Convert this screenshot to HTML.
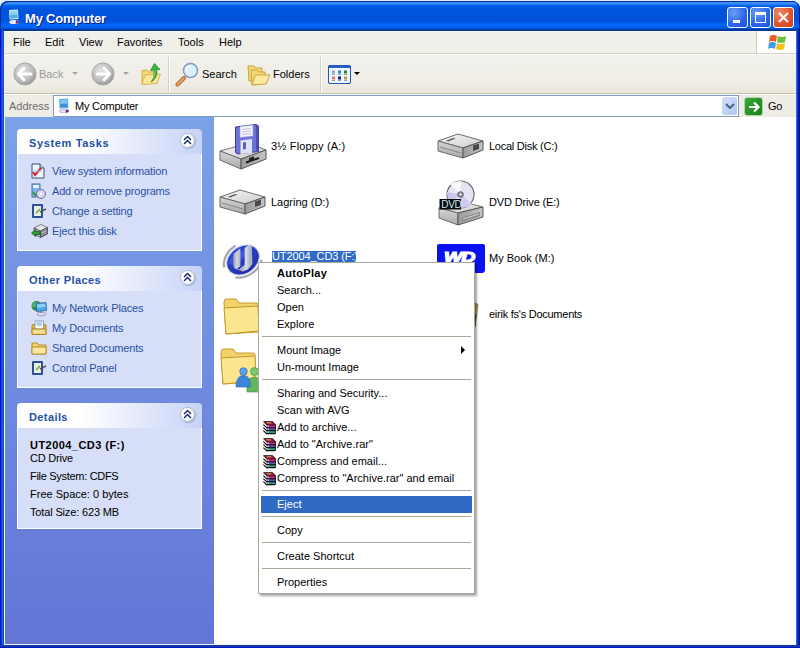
<!DOCTYPE html>
<html><head><meta charset="utf-8">
<style>
*{box-sizing:border-box}
html,body{margin:0;padding:0;width:800px;height:648px;overflow:hidden;background:#dfeef5}
body{font-family:"Liberation Sans",sans-serif;font-size:11px;color:#000;position:relative}
.a{position:absolute}
.t{position:absolute;white-space:nowrap;line-height:13px}
#win{position:absolute;left:0;top:1px;width:800px;height:647px;background:#0831d9;border-radius:8px 8px 0 0;overflow:hidden}
#title{position:absolute;left:0;top:0;width:800px;height:30px;border-radius:8px 8px 0 0;
 background:linear-gradient(to bottom,#0a3e9e 0px,#0a3e9e 1px,#3d8df7 1px,#3a8cf8 3px,#0a6af0 4px,#0058e3 6px,#0054dc 9px,#0052db 20px,#0064f6 23px,#0066fa 26px,#0048c0 28px,#003490 29px)}
#menubar{position:absolute;left:4px;top:31px;width:792px;height:23px;background:#f0efe9;border-top:1px solid #f8faff;border-bottom:1px solid #d6d3c6}
#toolbar{position:absolute;left:4px;top:54px;width:792px;height:40px;background:linear-gradient(#f8f8f4 0,#f1f0ea 3px,#efede6 28px,#ebe7da 38px);border-bottom:1px solid #c5c2b2}
#addr{position:absolute;left:4px;top:94px;width:792px;height:23px;background:#eeece4;border-top:1px solid #fff}
#pane{position:absolute;left:4px;top:117px;width:210px;height:527px;background:linear-gradient(#7ba2e7,#6375d6);border-left:1px solid #f0f4ff}
#content{position:absolute;left:214px;top:117px;width:582px;height:527px;background:#fff}
#bottom{position:absolute;left:4px;top:644px;width:792px;height:1px;background:#f0f4ff}
.box{position:absolute;left:17px;width:185px}
.hdr{position:absolute;left:0;top:0;width:185px;height:25px;border-radius:4px 4px 0 0;background:linear-gradient(to right,#fff 0%,#fff 35%,#c6d3f7 100%)}
.ht{position:absolute;left:12px;top:8px;font-weight:bold;color:#2150a6;white-space:nowrap;line-height:13px;letter-spacing:0.4px}
.bd{position:absolute;left:0;top:25px;width:185px;background:#d6dff7;border:1px solid #fff;border-top:none}
.chev{position:absolute;left:163px;top:4px;width:15px;height:15px;border-radius:50%;background:radial-gradient(circle at 45% 40%,#fff 60%,#eef0f8);border:1px solid #b4b8cc;box-shadow:1px 1px 1px rgba(120,130,170,.45)}
.lnk{position:absolute;left:34px;color:#2a50a6;letter-spacing:-0.17px;white-space:nowrap;line-height:13px}
.ic{position:absolute;left:13px}
.lbl{position:absolute;white-space:nowrap;line-height:13px}
.menu{position:absolute;left:258px;top:262px;width:217px;height:332px;background:#fff;border:1px solid #aca899;box-shadow:2px 2px 2px rgba(0,0,0,0.35)}
.mi{position:absolute;left:18px;white-space:nowrap;line-height:13px}
.sep{position:absolute;left:3px;width:209px;height:1px;background:#aca899}
</style></head><body>
<div id="win">
 <div id="title">
  <svg class="a" style="left:6px;top:7px" width="16" height="16" viewBox="0 0 16 16">
   <path d="M3 2 L12 1.5 L12.5 11 L3.5 11.5 Z" fill="#c8f0fc"/><path d="M4 3 L11.3 2.6 L11.6 10 L4.3 10.4 Z" fill="#8ad4f4"/><path d="M4.2 7 L11.5 6.5 L11.6 10 L4.3 10.4Z" fill="#5aaee8"/>
   <ellipse cx="8" cy="14" rx="4.8" ry="2" fill="#f0ecf6"/><path d="M10 12.5 Q13 12.5 12.8 14.5 Q11 16 9.5 15.5Z" fill="#6a2a8a"/>
  </svg>
  <div class="a" style="left:0;top:0;width:800px;height:30px;border-radius:8px 8px 0 0;box-shadow:inset 1px 1px 0 #0a2ea0, inset -1px 0 0 #00168a"></div>
  <div class="t" style="left:25px;top:10px;font-size:13px;font-weight:bold;color:#fff;text-shadow:1px 1px 0 #0a1e8a;line-height:15px;letter-spacing:-0.2px">My Computer</div>
  <div class="a" style="left:727px;top:6px;width:21px;height:21px;border:1px solid #fff;border-radius:3px;background:radial-gradient(circle at 30% 25%,#6b9cf8,#2b64e8 60%,#1d52d8)">
   <div class="a" style="left:5px;top:12px;width:7px;height:3px;background:#fff"></div></div>
  <div class="a" style="left:750px;top:6px;width:21px;height:21px;border:1px solid #fff;border-radius:3px;background:radial-gradient(circle at 30% 25%,#6b9cf8,#2b64e8 60%,#1d52d8)">
   <div class="a" style="left:4px;top:4px;width:11px;height:11px;border:1px solid #fff;border-top:3px solid #fff"></div></div>
  <div class="a" style="left:773px;top:6px;width:21px;height:21px;border:1px solid #fff;border-radius:3px;background:radial-gradient(circle at 30% 25%,#f08a68,#e0532a 60%,#c8401c)">
   <svg class="a" style="left:3px;top:3px" width="13" height="13"><path d="M2 2L11 11M11 2L2 11" stroke="#fff" stroke-width="2"/></svg></div>
 </div>
</div>

<div class="a" style="left:0;top:30px;width:4px;height:618px;background:linear-gradient(to right,#0012cc 0,#0012cc 1px,#0a3ae0 1px,#0a3ae0 2px,#1a62f2 2px,#1a62f2 3px,#0a4ec8 3px)"></div>
<div class="a" style="left:796px;top:30px;width:4px;height:618px;background:linear-gradient(to right,#2f6fe8 0,#2f6fe8 1px,#0038d8 1px,#0038d8 2px,#0020a8 2px,#0020a8 3px,#00108a 3px)"></div>
<div class="a" style="left:0;top:645px;width:800px;height:3px;background:linear-gradient(#1838a8 0,#1838a8 1px,#1038b8 1px,#1038b8 2px,#0018c0 2px)"></div>
<div id="menubar">
 <div class="t" style="left:9px;top:4px">File</div>
 <div class="t" style="left:41px;top:4px">Edit</div>
 <div class="t" style="left:75px;top:4px">View</div>
 <div class="t" style="left:113px;top:4px">Favorites</div>
 <div class="t" style="left:174px;top:4px">Tools</div>
 <div class="t" style="left:215px;top:4px">Help</div>
 <div class="a" style="left:752px;top:-1px;width:40px;height:22px;background:#fff;border-left:1px solid #cdc9bb">
  <svg class="a" style="left:11px;top:2px" width="20" height="18" viewBox="0 0 20 18">
   <path d="M2 3 Q5 1 9 3 L8 9 Q4 7 1 9 Z" fill="#ef5a24"/>
   <path d="M10 3 Q14 5 18 3 L17 9 Q13 11 9 9 Z" fill="#6fbe3b"/>
   <path d="M1 10 Q4 8 8 10 L7 16 Q3 14 0 16 Z" fill="#3f9be8"/>
   <path d="M9 10 Q13 12 17 10 L16 16 Q12 18 8 16 Z" fill="#f7c01b"/>
  </svg>
 </div>
</div>

<div id="toolbar"></div>
<!-- toolbar items (page coords) -->
<svg class="a" style="left:13px;top:62px" width="24" height="24" viewBox="0 0 24 24">
 <defs><radialGradient id="gg" cx="40%" cy="35%" r="65%"><stop offset="0" stop-color="#e6e6e6"/><stop offset="0.7" stop-color="#bcbcbc"/><stop offset="1" stop-color="#9a9a9a"/></radialGradient></defs>
 <circle cx="12" cy="12" r="11" fill="url(#gg)" stroke="#a8a8a8" stroke-width="1"/>
 <path d="M11 6 L5.5 12 L11 18 M6 12 H18" stroke="#fff" stroke-width="3" fill="none" stroke-linecap="round" stroke-linejoin="round"/>
</svg>
<div class="t" style="left:39px;top:68px;color:#9a9a9a">Back</div>
<svg class="a" style="left:72px;top:72px" width="7" height="4"><path d="M0 0H6L3 3Z" fill="#a7a7a7"/></svg>
<svg class="a" style="left:91px;top:62px" width="24" height="24" viewBox="0 0 24 24">
 <circle cx="12" cy="12" r="11" fill="url(#gg)" stroke="#a8a8a8" stroke-width="1"/>
 <path d="M13 6 L18.5 12 L13 18 M18 12 H6" stroke="#fff" stroke-width="3" fill="none" stroke-linecap="round" stroke-linejoin="round"/>
</svg>
<svg class="a" style="left:123px;top:72px" width="7" height="4"><path d="M0 0H6L3 3Z" fill="#a7a7a7"/></svg>
<svg class="a" style="left:140px;top:62px" width="22" height="24" viewBox="0 0 22 24">
 <path d="M2 8.5 L7 8 L9 10 L17 9.5 L17 21 L2 22.5 Z" fill="#f3d76e" stroke="#c9a230" stroke-width=".8"/>
 <path d="M2 22.5 L5 13 L20.5 12 L17 21.5 Z" fill="#fbe79a" stroke="#d7a84a" stroke-width=".8"/>
 <path d="M11 20 Q15 16 14 8 L10.5 8.5 L14.5 1.5 L20 7.5 L16.5 7.8 Q18 16 11 20 Z" fill="#3cb43c" stroke="#1b7a1b" stroke-width=".7"/>
 <path d="M13 17 Q15.5 13 15.2 8" stroke="#7fe07f" stroke-width=".8" fill="none"/>
</svg>
<div class="a" style="left:168px;top:57px;width:1px;height:35px;background:#d3d0c2"></div>
<div class="a" style="left:169px;top:57px;width:1px;height:35px;background:#fff"></div>
<svg class="a" style="left:174px;top:62px" width="26" height="26" viewBox="0 0 26 26">
 <path d="M3.5 22.5 L10 16" stroke="#b8743a" stroke-width="4.2" stroke-linecap="round"/>
 <path d="M3.5 22.5 L10 16" stroke="#eab07a" stroke-width="1.6" stroke-linecap="round"/>
 <circle cx="16.5" cy="8.5" r="7" fill="#dcefff" stroke="#7e9fc0" stroke-width="1.6"/>
 <path d="M12 8 Q13 4.5 17 4" stroke="#fff" stroke-width="1.5" fill="none"/>
</svg>
<div class="t" style="left:202px;top:68px">Search</div>
<svg class="a" style="left:246px;top:63px" width="26" height="24" viewBox="0 0 26 24">
 <path d="M2 3 L8 3 L10 5 L16 5 L16 16 L3 18 Z" fill="#f5da7a" stroke="#caa33a" stroke-width="1"/>
 <path d="M5 7 L11 7 L13 9 L19 9 L19 20 L6 22 Z" fill="#f5da7a" stroke="#caa33a" stroke-width="1"/>
 <path d="M6 22 L9 12 L24 12 L20 21 Z" fill="#fbe9a4" stroke="#caa33a" stroke-width="1"/>
</svg>
<div class="t" style="left:273px;top:68px">Folders</div>
<div class="a" style="left:320px;top:57px;width:1px;height:35px;background:#d3d0c2"></div>
<div class="a" style="left:321px;top:57px;width:1px;height:35px;background:#fff"></div>
<svg class="a" style="left:328px;top:65px" width="23" height="19" viewBox="0 0 23 19">
 <rect x="0.5" y="0.5" width="22" height="18" rx="1.5" fill="#fff" stroke="#1f57b8"/>
 <rect x="1" y="1" width="21" height="2" fill="#2a62c6"/>
 <rect x="1" y="3" width="21" height="15" fill="#eef6fe"/>
 <rect x="4" y="5.5" width="3" height="3" fill="#a596d0"/><rect x="10" y="5.5" width="3" height="3" fill="#2f86b8"/><rect x="16" y="5.5" width="3" height="3" fill="#1f8a2a"/>
 <rect x="4" y="9" width="3" height=".8" fill="#889"/><rect x="10" y="9" width="3" height=".8" fill="#889"/><rect x="16" y="9" width="3" height=".8" fill="#889"/>
 <rect x="4" y="11.5" width="3" height="3" fill="#e67a62"/><rect x="10" y="11.5" width="3" height="3" fill="#101e8a"/><rect x="16" y="11.5" width="3" height="3" fill="#b0a030"/>
 <rect x="4" y="15" width="3" height=".8" fill="#889"/><rect x="10" y="15" width="3" height=".8" fill="#889"/><rect x="16" y="15" width="3" height=".8" fill="#889"/>
 <rect x="0.5" y="0.5" width="22" height="18" rx="1.5" fill="none" stroke="#1f57b8"/>
</svg>
<svg class="a" style="left:354px;top:72px" width="7" height="4"><path d="M0 0H6L3 3Z" fill="#000"/></svg>

<div id="addr">
 <div class="t" style="left:5px;top:5px;color:#6d6d6d">Address</div>
 <div class="a" style="left:49px;top:0px;width:686px;height:22px;background:#fff;border:1px solid #7f9db9"></div>
</div>
<svg class="a" style="left:56px;top:97px" width="16" height="16" viewBox="0 0 16 16">
 <path d="M3 2 L12 1.5 L12.5 11 L3.5 11.5 Z" fill="#6aa8d8"/><path d="M4 3 L11.3 2.6 L11.6 10 L4.3 10.4 Z" fill="#7cc8f2"/><path d="M4.2 7 L11.5 6.5 L11.6 10 L4.3 10.4Z" fill="#3f90d8"/>
 <ellipse cx="8" cy="14" rx="4.8" ry="2" fill="#e6e0ee" stroke="#a090b0" stroke-width=".5"/><path d="M10 12.5 Q13 12.5 12.8 14.5 Q11 16 9.5 15.5Z" fill="#6a2a8a"/>
</svg>
<div class="t" style="left:75px;top:100px;letter-spacing:-0.25px">My Computer</div>
<div class="a" style="left:722px;top:97px;width:15px;height:18px;border-radius:2px;background:linear-gradient(135deg,#d2defc,#b2c6f2)">
 <svg class="a" style="left:3px;top:6px" width="10" height="6"><path d="M1 1 L5 5 L9 1" stroke="#4d6185" stroke-width="2" fill="none"/></svg>
</div>
<div class="a" style="left:744px;top:97px;width:19px;height:19px;border-radius:3px;background:linear-gradient(135deg,#3aa83a,#17801a);border:1px solid #a8d8a8">
 <svg class="a" style="left:1px;top:1px" width="16" height="16"><path d="M3 8 H12 M8 3.5 L12.5 8 L8 12.5" stroke="#fff" stroke-width="2.2" fill="none"/></svg>
</div>
<div class="t" style="left:768px;top:100px;letter-spacing:-0.4px">Go</div>

<div id="pane"></div>
<div id="content"></div>
<div id="bottom"></div>
<!-- TASK PANE -->
<div class="box" style="top:129px;height:122px">
 <div class="hdr"><div class="ht" style="letter-spacing:0.65px">System Tasks</div><div class="chev"><svg class="a" style="left:-1px;top:-1px" width="15" height="15"><path d="M4 7 L7.5 3.5 L11 7 M4 11 L7.5 7.5 L11 11" stroke="#1b2f70" stroke-width="1.5" fill="none"/></svg></div></div>
 <div class="bd" style="height:97px">
  <svg class="ic" style="top:9px" width="14" height="16" viewBox="0 0 14 16"><path d="M1 1 H9 L13 5 V15 H1 Z" fill="#f0f4fb" stroke="#3c4f7a"/><path d="M9 1 V5 H13" fill="#c8d8ef" stroke="#3c4f7a"/><path d="M2 9 L4 12 L10 5" stroke="#d22" stroke-width="2" fill="none"/><rect x="2" y="7" width="9" height="2" fill="#8cc8f0" opacity=".5"/></svg>
  <div class="lnk" style="top:11px">View system information</div>
  <svg class="ic" style="top:29px" width="16" height="16" viewBox="0 0 16 16"><rect x="1" y="1" width="8" height="13" fill="#7eb7e8" stroke="#4a70a0"/><rect x="2" y="2" width="6" height="3" fill="#e8f0f8"/><path d="M2 9 L5 13" stroke="#2a9a2a" stroke-width="2"/><circle cx="10" cy="11" r="4.5" fill="#d9d6ee" stroke="#6a6aa0"/><circle cx="10" cy="11" r="1.2" fill="#fff"/></svg>
  <div class="lnk" style="top:31px">Add or remove programs</div>
  <svg class="ic" style="top:49px" width="16" height="16" viewBox="0 0 16 16"><rect x="1" y="1" width="11" height="14" rx="1" fill="#2a4f96"/><rect x="3" y="3" width="7" height="10" fill="#e9f1d8"/><path d="M5 10 L9 6" stroke="#6aa040" stroke-width="1.5"/><path d="M9 9 L15 6" stroke="#555" stroke-width="1.5"/></svg>
  <div class="lnk" style="top:51px">Change a setting</div>
  <svg class="ic" style="top:69px" width="17" height="16" viewBox="0 0 17 16"><path d="M3 5 L10 1.5 L16.5 4.5 L9.5 8 Z" fill="#e8e8ec" stroke="#666" stroke-width=".8"/><path d="M3 5 L9.5 8 L9.5 14.5 L3 11.5 Z" fill="#b8b4c0" stroke="#555" stroke-width=".8"/><path d="M9.5 8 L16.5 4.5 L16.5 11 L9.5 14.5 Z" fill="#8a8a92" stroke="#444" stroke-width=".8"/><path d="M11 10 L15 8" stroke="#d8c8d8" stroke-width=".8"/><path d="M0.5 10 L4.5 6.5 V8.5 H8.5 V11.5 H4.5 V13.5 Z" fill="#2ea02e" stroke="#0d4d0d" stroke-width=".7"/></svg>
  <div class="lnk" style="top:71px">Eject this disk</div>
 </div>
</div>
<div class="box" style="top:266px;height:122px">
 <div class="hdr"><div class="ht">Other Places</div><div class="chev"><svg class="a" style="left:-1px;top:-1px" width="15" height="15"><path d="M4 7 L7.5 3.5 L11 7 M4 11 L7.5 7.5 L11 11" stroke="#1b2f70" stroke-width="1.5" fill="none"/></svg></div></div>
 <div class="bd" style="height:97px">
  <svg class="ic" style="top:9px" width="17" height="17" viewBox="0 0 17 17"><circle cx="5.5" cy="6" r="5" fill="#2a8a4a"/><path d="M1.5 4 Q5 0.5 9 3 L8 7 Q4 5 1.5 8Z" fill="#57c06a"/><path d="M5 3.5 L15 2.5 L15.5 10.5 L5.5 11.5 Z" fill="#4aa8ec" stroke="#2b5f9c" stroke-width=".8"/><path d="M6 4.5 L14 3.8 L14.3 7 L6.3 7.7Z" fill="#8fd0f8"/><ellipse cx="10.5" cy="14" rx="4.5" ry="2" fill="#dcd8ea" stroke="#7a7690" stroke-width=".6"/><path d="M10 11.5 V12.5" stroke="#555" stroke-width="1.5"/></svg>
  <div class="lnk" style="top:11px">My Network Places</div>
  <svg class="ic" style="top:29px" width="16" height="16" viewBox="0 0 16 16"><path d="M1 6 Q1 4.5 2.5 4.5 H14 Q15 4.5 15 6 V14 H1 Z" fill="#e8b838" stroke="#a07818" stroke-width=".8"/><rect x="4" y="1" width="8.5" height="8" fill="#fff" stroke="#6a7aa0" stroke-width=".7"/><path d="M5.5 3H11M5.5 5H11" stroke="#4a8ad0" stroke-width=".9"/><path d="M1 9 H15 V14.5 H1 Z" fill="#f6d66a" stroke="#a07818" stroke-width=".8"/><rect x="3" y="10.5" width="10" height="2.5" fill="#f0e4c0" opacity=".7"/></svg>
  <div class="lnk" style="top:31px">My Documents</div>
  <svg class="ic" style="top:50px" width="16" height="14" viewBox="0 0 16 14"><path d="M1 2 H6 L7.5 4 H15 V13 H1 Z" fill="#f3d36a" stroke="#b48e2a"/><path d="M1 6 H15 V13 H1 Z" fill="#fbe8a0" stroke="#b48e2a"/></svg>
  <div class="lnk" style="top:51px">Shared Documents</div>
  <svg class="ic" style="top:69px" width="16" height="16" viewBox="0 0 16 16"><rect x="1" y="1" width="11" height="14" rx="1" fill="#2a4f96"/><rect x="3" y="3" width="7" height="10" fill="#e9f1d8"/><path d="M5 10 L9 6" stroke="#6aa040" stroke-width="1.5"/><path d="M9 9 L15 6" stroke="#555" stroke-width="1.5"/></svg>
  <div class="lnk" style="top:71px">Control Panel</div>
 </div>
</div>
<div class="box" style="top:403px;height:126px">
 <div class="hdr"><div class="ht">Details</div><div class="chev"><svg class="a" style="left:-1px;top:-1px" width="15" height="15"><path d="M4 7 L7.5 3.5 L11 7 M4 11 L7.5 7.5 L11 11" stroke="#1b2f70" stroke-width="1.5" fill="none"/></svg></div></div>
 <div class="bd" style="height:101px">
  <div class="lbl" style="left:12px;top:11px;font-weight:bold;letter-spacing:0.45px">UT2004_CD3 (F:)</div>
  <div class="lbl" style="left:12px;top:24px;letter-spacing:-0.2px">CD Drive</div>
  <div class="lbl" style="left:12px;top:42px;letter-spacing:-0.3px">File System: CDFS</div>
  <div class="lbl" style="left:12px;top:60px">Free Space: 0 bytes</div>
  <div class="lbl" style="left:12px;top:78px;letter-spacing:-0.15px">Total Size: 623 MB</div>
 </div>
</div>
<!-- CONTENT ICONS -->
<svg width="0" height="0" style="position:absolute">
 <defs>
  <linearGradient id="dtop" x1="0" y1="0" x2="1" y2="1"><stop offset="0" stop-color="#f4f4f4"/><stop offset="0.5" stop-color="#e2e2e2"/><stop offset="1" stop-color="#c9c9c9"/></linearGradient>
  <linearGradient id="dleft" x1="0" y1="0" x2="0" y2="1"><stop offset="0" stop-color="#d6d6d6"/><stop offset="1" stop-color="#a9a9a9"/></linearGradient>
  <linearGradient id="dright" x1="0" y1="0" x2="1" y2="0"><stop offset="0" stop-color="#9a9a9a"/><stop offset="1" stop-color="#c4c4c4"/></linearGradient>
  <g id="drive">
   <path d="M1 10 L21 3 L46 10 L26 17 Z" fill="url(#dtop)" stroke="#6d6d6d" stroke-width="1"/>
   <path d="M1 10 L26 17 L26 27 L1 20 Z" fill="url(#dleft)" stroke="#6a6a6a" stroke-width="1"/>
   <path d="M26 17 L46 10 L46 19 L26 27 Z" fill="url(#dright)" stroke="#555" stroke-width="1"/>
   <path d="M3 16 L24 22" stroke="#8a8a8a" stroke-width="1"/>
   <path d="M36 14.5 L42 12.5 L42 18 L36 20 Z" fill="#4a4a4a"/>
   <path d="M9 9.8 L16.5 7 L18.5 7.6 L11 10.4 Z" fill="#505050"/>
  </g>
  <g id="rar">
   <path d="M0.3 0.3 H9.6 L13 3.8 V12.3 L12 13.3 H3.8 V4 Z" fill="#150008"/>
   <path d="M0.3 0.3 L3.8 4 L3.8 4.5 L0.3 1 Z" fill="#150008"/>
   <path d="M1.2 0.8 H9.3 L12.3 3.7 H4.2 Z" fill="#8a1d42"/>
   <path d="M3.2 1.2 H7.6 L8.9 2.6 H4.5 Z" fill="#d89a52"/>
   <rect x="4.3" y="4.4" width="8.2" height="1.9" fill="#c03488"/>
   <rect x="4.3" y="7.3" width="8.2" height="1.9" fill="#4a5cb0"/>
   <rect x="4.3" y="10.2" width="8.2" height="1.9" fill="#23a07e"/>
   <rect x="4.4" y="4.6" width="1.3" height="1.3" fill="#fff"/><rect x="4.4" y="7.5" width="1.3" height="1.3" fill="#fff"/><rect x="4.4" y="10.4" width="1.3" height="1.3" fill="#fff"/>
   <path d="M0.3 3.6 L4 7.2 M0.3 6.6 L4 10.2 M0.3 9.6 L4 13.2" stroke="#000" stroke-width="1.1"/>
  </g>
 </defs>
</svg>
<!-- Floppy A: -->
<svg class="a" style="left:219px;top:122px" width="48" height="48" viewBox="0 0 48 48">
 <path d="M1 29 L30 21 L47 28 L22 37 Z" fill="url(#dtop)" stroke="#777"/>
 <path d="M1 29 L22 37 L22 47 L1 38 Z" fill="url(#dleft)" stroke="#6a6a6a"/>
 <path d="M22 37 L47 28 L47 37 L22 47 Z" fill="url(#dright)" stroke="#555"/>
 <path d="M27 40.5 L40 36" stroke="#1a1a1a" stroke-width="2"/>
 <rect x="30" y="36" width="5" height="3.5" fill="#222" transform="skewY(-20) translate(0,11)"/>
 <path d="M16.5 5 L37 2.5 L39.5 4 L39.5 29.5 L19 32 L16.5 30.5 Z" fill="#6d72d8" stroke="#3a3e90"/>
 <path d="M37 2.5 L39.5 4 L39.5 29.5 L37 28 Z" fill="#4c51b0"/>
 <path d="M21 4.5 L34 3 L34 14 L21 15.5 Z" fill="#f2f2fa" stroke="#9a9ad0" stroke-width=".5"/>
 <path d="M23 7.5 L32 6.5 M23 10 L32 9 M23 12.5 L32 11.5" stroke="#b8b8d8" stroke-width=".8"/>
 <path d="M21.5 18.5 L33 17 L33 31 L21.5 32 Z" fill="#e0e3f6"/>
 <path d="M24 20.5 L27 20 L27 27 L24 27.5 Z" fill="#5a5fc0"/>
</svg>
<div class="lbl" style="left:271px;top:140px;letter-spacing:0.15px">3½ Floppy (A:)</div>
<!-- Local Disk C: -->
<svg class="a" style="left:437px;top:131px" width="48" height="30" viewBox="0 0 48 30"><use href="#drive"/></svg>
<div class="lbl" style="left:489px;top:140px;letter-spacing:-0.25px">Local Disk (C:)</div>
<!-- Lagring D: -->
<svg class="a" style="left:219px;top:187px" width="48" height="30" viewBox="0 0 48 30"><use href="#drive"/></svg>
<div class="lbl" style="left:271px;top:196px">Lagring (D:)</div>
<!-- DVD E: -->
<svg class="a" style="left:437px;top:178px" width="48" height="48" viewBox="0 0 48 48">
 <path d="M2 30 L26 24 L46 29 L21 35 Z" fill="url(#dtop)" stroke="#777"/>
 <path d="M2 30 L21 35 L21 47 L2 40 Z" fill="url(#dleft)" stroke="#6a6a6a"/>
 <path d="M21 35 L46 29 L46 39 L21 47 Z" fill="url(#dright)" stroke="#555"/>
 <path d="M25 39.5 L43 34 L43 38 L25 43.5 Z" fill="#8a8a8a"/>
 <path d="M26 41 L42 36" stroke="#d8d8d8" stroke-width="1"/>
 <circle cx="23.5" cy="16.5" r="13.5" fill="#e6e4f4" stroke="#6c6c78" stroke-width="1.2"/>
 <path d="M23.5 16.5 L13 6 Q18 3 24 3 Z" fill="#f8f8fd"/>
 <path d="M23.5 16.5 L35 26 Q30 30 23 30 Z" fill="#cfcaee"/>
 <path d="M23.5 16.5 L10 14 Q10 20 13 24 Z" fill="#c8c6ea"/>
 <circle cx="23.5" cy="16.5" r="2.8" fill="#9a9aa8" stroke="#555"/><circle cx="23.5" cy="16.5" r="1" fill="#fff"/>
 <rect x="2.5" y="21" width="21.5" height="10.5" fill="#0a0a0a"/>
 <text x="4.3" y="30" font-family="Liberation Sans" font-size="10" fill="#cdecf2" letter-spacing="-0.3">DVD</text>
</svg>
<div class="lbl" style="left:489px;top:196px;letter-spacing:-0.15px">DVD Drive (E:)</div>
<!-- UT2004 F: -->
<svg class="a" style="left:219px;top:238px" width="48" height="42" viewBox="0 0 48 42">
 <defs><linearGradient id="utb" x1="0" y1="0" x2="0" y2="1"><stop offset="0" stop-color="#3448d8"/><stop offset="1" stop-color="#1f2ea8"/></linearGradient>
 <linearGradient id="utu" x1="0" y1="0" x2="1" y2="0"><stop offset="0" stop-color="#8d93a0"/><stop offset=".5" stop-color="#d8dce4"/><stop offset="1" stop-color="#9ca2ae"/></linearGradient></defs>
 <g transform="translate(24,22) rotate(-35)">
  <ellipse rx="20.5" ry="16" fill="none" stroke="#9a9fab" stroke-width="2.2" stroke-dasharray="0 12 34 16 26 30" opacity=".9"/>
  <ellipse rx="17.5" ry="13.5" fill="url(#utb)" stroke="#c9cde0" stroke-width="1"/>
  <ellipse cx="-3" cy="-5" rx="11" ry="4" fill="#5068e6" opacity=".55"/>
 </g>
 <path d="M15 16 L21 11 L21 28 L17 31 L15 29 Z" fill="url(#utu)" stroke="#e8eaf0" stroke-width=".6"/>
 <path d="M26 10 L32 6 L33 26 L29 31 L24 33 L21 31 L26 27 Z" fill="url(#utu)" stroke="#e8eaf0" stroke-width=".6"/>
 <path d="M18 31 L24 33" stroke="#c0a0a0" stroke-width="1"/>
</svg>
<div class="a" style="left:272px;top:251px;width:84px;height:12px;background:#316ac5"></div>
<div class="lbl" style="left:272px;top:250px;color:#fff;letter-spacing:-0.1px">UT2004_CD3 (F:)</div>
<!-- WD My Book M: -->
<svg class="a" style="left:437px;top:244px" width="48" height="30" viewBox="0 0 48 30">
 <path d="M2 0 H46 Q48 0 48 2 V27 L46 29 H2 Q0 29 0 27 V2 Q0 0 2 0Z" fill="#0a12f2"/>
 <g transform="translate(7,18) scale(1.3,1)"><text x="0" y="0" font-family="Liberation Sans" font-size="15" font-style="italic" font-weight="bold" fill="#fff" stroke="#fff" stroke-width="1.2" letter-spacing="-0.8">WD</text></g>
</svg>
<div class="lbl" style="left:489px;top:252px">My Book (M:)</div>
<!-- folder rows -->
<svg class="a" style="left:222px;top:296px" width="40" height="40" viewBox="0 0 40 40">
 <path d="M2 6 Q2 3 5 3 L14 3 L17 7 L34 7 Q36 7 36 9 L36 36 L4 38 Z" fill="#f3d26a" stroke="#c39a2a"/>
 <path d="M4 38 L2 12 L36 10 L37 35 Z" fill="#fbe58e" stroke="#c39a2a"/>
</svg>
<div class="lbl" style="left:489px;top:308px;letter-spacing:-0.25px">eirik fs's Documents</div>
<svg class="a" style="left:462px;top:296px" width="20" height="40" viewBox="0 0 20 40">
 <path d="M11 5.5 L16.5 8 L15 20 L13.5 31 L11 31 Z" fill="#9a9450"/>
 <path d="M11 18 L14.5 18 L13.5 31 L11 31 Z" fill="#4a4a3a"/>
</svg>
<svg class="a" style="left:219px;top:346px" width="42" height="48" viewBox="0 0 42 48">
 <path d="M2 6 Q2 3 5 3 L14 3 L17 7 L34 7 Q36 7 36 9 L36 36 L4 38 Z" fill="#f3d26a" stroke="#c39a2a"/>
 <path d="M4 38 L2 12 L36 10 L37 35 Z" fill="#fbe58e" stroke="#c39a2a"/>
 <path d="M28 46 Q27 31 35.5 31 Q43 31 43 46 Z" fill="#62b85e" stroke="#3f8a3c" stroke-width=".6"/><circle cx="35.5" cy="25.5" r="4" fill="#78cc70" stroke="#3f8a3c" stroke-width=".6"/>
 <path d="M17 41 Q17 29.5 24.5 29.5 Q32 29.5 31 41 Z" fill="#3d86dc" stroke="#245fa8" stroke-width=".6"/><circle cx="24.5" cy="25.5" r="3.8" fill="#5aa0ec" stroke="#245fa8" stroke-width=".6"/>
</svg>

<!-- CONTEXT MENU -->
<div class="menu">
 <div class="mi" style="top:4px;font-weight:bold;letter-spacing:0.3px">AutoPlay</div>
 <div class="mi" style="top:21px">Search...</div>
 <div class="mi" style="top:38px">Open</div>
 <div class="mi" style="top:55px">Explore</div>
 <div class="sep" style="top:73px"></div>
 <div class="mi" style="top:81px">Mount Image</div>
 <svg class="a" style="left:202px;top:83px" width="5" height="8"><path d="M0 0 L4 4 L0 8 Z" fill="#000"/></svg>
 <div class="mi" style="top:98px">Un-mount Image</div>
 <div class="sep" style="top:116px"></div>
 <div class="mi" style="top:124px">Sharing and Security...</div>
 <div class="mi" style="top:141px">Scan with AVG</div>
<svg class="a" style="left:4px;top:158px" width="14" height="14" viewBox="0 0 14 14"><use href="#rar"/></svg>
<svg class="a" style="left:4px;top:175px" width="14" height="14" viewBox="0 0 14 14"><use href="#rar"/></svg>
<svg class="a" style="left:4px;top:192px" width="14" height="14" viewBox="0 0 14 14"><use href="#rar"/></svg>
<svg class="a" style="left:4px;top:209px" width="14" height="14" viewBox="0 0 14 14"><use href="#rar"/></svg>
 <div class="mi" style="top:158px">Add to archive...</div>
 <div class="mi" style="top:175px">Add to "Archive.rar"</div>
 <div class="mi" style="top:192px">Compress and email...</div>
 <div class="mi" style="top:209px">Compress to "Archive.rar" and email</div>
 <div class="sep" style="top:227px"></div>
 <div class="a" style="left:2px;top:233px;width:211px;height:17px;background:#316ac5"></div>
 <div class="mi" style="top:235px;color:#fff">Eject</div>
 <div class="sep" style="top:253px"></div>
 <div class="mi" style="top:261px">Copy</div>
 <div class="sep" style="top:279px"></div>
 <div class="mi" style="top:287px">Create Shortcut</div>
 <div class="sep" style="top:305px"></div>
 <div class="mi" style="top:313px">Properties</div>
</div>
</body></html>
